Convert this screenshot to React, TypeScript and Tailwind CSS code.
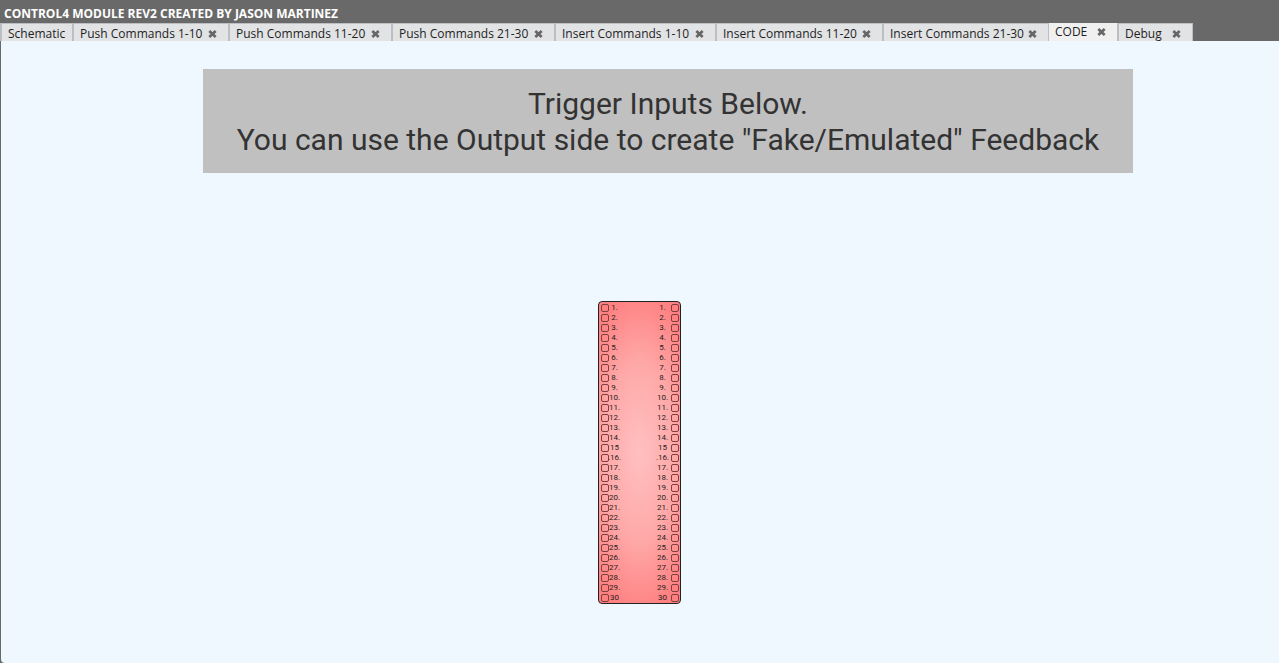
const tabs = [
  { label: "Schematic", width: "w-[72px]", closable: false },
  { label: "Push Commands 1-10", width: "w-[156px]", closable: true },
  { label: "Push Commands 11-20", width: "w-[163px]", closable: true },
  { label: "Push Commands 21-30", width: "w-[163px]", closable: true },
  { label: "Insert Commands 1-10", width: "w-[161px]", closable: true },
  { label: "Insert Commands 11-20", width: "w-[167px]", closable: true },
  { label: "Insert Commands 21-30", width: "w-[166px]", closable: true },
  { label: "CODE", width: "w-[69px]", closable: true },
  { label: "Debug", width: "w-[76px]", closable: true },
];

const pins = Array.from({ length: 30 }, (_, i) => {
  const n = i + 1;
  if (n === 15 || n === 30) return `${n}`;
  if (n === 16) return ".16.";
  return `${n}.`;
});

function CloseIcon() {
  return (
    <svg width="9" height="8" viewBox="0 0 9 8" aria-hidden="true">
      <path d="M1.3 1 L7.7 7 M7.7 1 L1.3 7" stroke="#666" strokeWidth="2.7" fill="none" />
    </svg>
  );
}

function Tab({ label, width, closable }: { label: string; width: string; closable: boolean }) {
  const active = label === "CODE";
  const look = active
    ? "bg-[#f0f0f0] border-l border-[#bdbec1]"
    : "bg-[#e2e3e5] border-l-2 border-t border-[#bdbec1] pt-0.5 last:border-r";
  return (
    <div className={`flex shrink-0 items-center justify-between pl-1.5 pr-[11px] ${width} ${look}`}>
      <button type="button" role="tab" aria-selected={active} className="whitespace-nowrap leading-4">
        {label}
      </button>
      {closable && (
        <button type="button" aria-label={`Close ${label}`}>
          <CloseIcon />
        </button>
      )}
    </div>
  );
}

function Pin() {
  return <span className="size-2 shrink-0 rounded-[2px] border border-[#7d3f3f]" />;
}

export default function App() {
  return (
    <div className="flex min-h-screen flex-col bg-[#696969] font-['Open_Sans','Noto_Sans',sans-serif] text-[12px] text-[#1e1e1e]">
      <h1 className="h-[23px] pl-1 pt-1 font-bold leading-[19px] text-white">
        CONTROL4 MODULE REV2 CREATED BY JASON MARTINEZ
      </h1>
      <div role="tablist" className="flex h-[18px]">
        {tabs.map((t) => (
          <Tab key={t.label} {...t} />
        ))}
      </div>
      <main className="ml-px flex grow flex-col items-center rounded-bl bg-[#f0f8ff] pr-0.5 pt-7 font-[Roboto,sans-serif]">
        <div className="pl-[58px]">
          <p className="bg-[#c0c0c0] px-[34px] pb-[15px] pt-[17px] text-center text-[30px] leading-9 text-[#333]">
            Trigger Inputs Below.
            <br />
            You can use the Output side to create "Fake/Emulated" Feedback
          </p>
        </div>
        <ol className="mt-32 w-[83px] rounded border border-[#222] bg-[radial-gradient(80%_54%_at_center,#ffc0c0,#ffa8a8_55%,#ff8080)] pl-0.5 pr-px pt-px text-[8px] leading-[10px]">
          {pins.map((p) => (
            <li key={p} className="flex h-2.5 items-center justify-between">
              <span className="flex items-center">
                <Pin />
                <span className="flex w-3 justify-center">{p}</span>
              </span>
              <span className="flex items-center">
                <span className="flex w-4 justify-center">{p}</span>
                <Pin />
              </span>
            </li>
          ))}
        </ol>
      </main>
    </div>
  );
}
